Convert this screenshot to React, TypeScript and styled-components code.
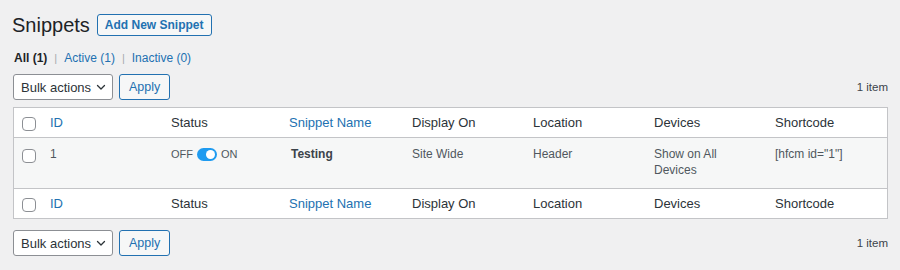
import React from 'react'
import styled, { createGlobalStyle } from 'styled-components'

const GlobalStyle = createGlobalStyle`
  html, body {
    margin: 0;
    background: #f0f0f1;
  }
  body {
    font-family: "Liberation Sans", Arial, sans-serif;
    font-size: 13px;
    color: #3c434a;
  }
`

const Wrap = styled.div`
  padding: 10px 12px 0 13px;
`

const TitleRow = styled.div`
  display: flex;
  align-items: center;
  gap: 7px;
`

const Heading = styled.h1`
  margin: 0 0 0 -1px;
  font-size: 20px;
  font-weight: 400;
  line-height: 30px;
  color: #1d2327;
`

const Button = styled.button<{ $strong?: boolean }>`
  height: ${(p) => (p.$strong ? '22px' : '26px')};
  padding: 0 ${(p) => (p.$strong ? '7px' : '9px')};
  border: 1px solid #2271b1;
  border-radius: 3px;
  background: #f6f7f7;
  color: #2271b1;
  font-family: inherit;
  font-size: ${(p) => (p.$strong ? '12px' : '12.5px')};
  font-weight: ${(p) => (p.$strong ? 700 : 400)};
  line-height: 1;
  cursor: pointer;
`

const Views = styled.ul`
  display: flex;
  align-items: center;
  gap: 7px;
  margin: 8px 0 0 1px;
  padding: 0;
  list-style: none;
  font-size: 12px;
  line-height: 20px;
`

const ViewItem = styled.li<{ $current?: boolean }>`
  color: ${(p) => (p.$current ? '#1d2327' : '#2271b1')};
  font-weight: ${(p) => (p.$current ? 700 : 400)};
`

const Sep = styled.li`
  color: #a7aaad;
  font-size: 11px;
`

const TableNav = styled.div<{ $top?: number }>`
  display: flex;
  align-items: center;
  gap: 6px;
  margin-top: ${(p) => p.$top ?? 0}px;
  height: 26px;
`

const Select = styled.div`
  display: flex;
  align-items: center;
  justify-content: space-between;
  box-sizing: border-box;
  width: 100px;
  height: 26px;
  padding: 0 5px 0 7px;
  border: 1px solid #8c8f94;
  border-radius: 3px;
  background: #fff;
  color: #2c3338;
  font-size: 13px;
`

const ItemCount = styled.span`
  margin-left: auto;
  font-size: 11.5px;
  color: #3c434a;
`

const Table = styled.table`
  width: 100%;
  margin-top: 7px;
  border: 1px solid #c3c4c7;
  border-spacing: 0;
  table-layout: fixed;
  background: #fff;
`

const HeadCell = styled.th<{ $link?: boolean; $foot?: boolean }>`
  padding: 6px 10px;
  text-align: left;
  font-weight: 400;
  font-size: 13px;
  line-height: 17px;
  color: ${(p) => (p.$link ? '#2271b1' : '#2c3338')};
  ${(p) => (p.$foot ? 'border-top: 1px solid #c3c4c7;' : 'border-bottom: 1px solid #c3c4c7;')}
  vertical-align: top;
`

const CheckCell = styled.th<{ $foot?: boolean; $body?: boolean }>`
  padding: ${(p) => (p.$body ? '8px 0 0 8px' : '6px 0 0 8px')};
  text-align: left;
  vertical-align: top;
  ${(p) => (p.$body ? '' : p.$foot ? 'border-top: 1px solid #c3c4c7;' : 'border-bottom: 1px solid #c3c4c7;')}
`

const Checkbox = styled.span`
  display: block;
  box-sizing: border-box;
  width: 14px;
  height: 14px;
  margin-top: 3px;
  border: 1px solid #8c8f94;
  border-radius: 4px;
  background: #fff;
`

const BodyRow = styled.tr`
  background: #f6f7f7;
`

const Cell = styled.td`
  padding: 8px 10px 10px;
  font-size: 12px;
  line-height: 16px;
  color: #50575e;
  vertical-align: top;
`

const Name = styled.strong`
  margin-left: 2px;
  color: #3c434a;
`

const Status = styled.span`
  display: inline-flex;
  align-items: center;
  gap: 4px;
  font-size: 11px;
`

const Toggle = styled.span<{ $on?: boolean }>`
  position: relative;
  display: inline-block;
  width: 20px;
  height: 13px;
  border-radius: 7px;
  background: ${(p) => (p.$on ? '#1e9bf0' : '#ccc')};

  &::after {
    content: '';
    position: absolute;
    top: 2px;
    left: ${(p) => (p.$on ? '9px' : '2px')};
    width: 9px;
    height: 9px;
    border-radius: 50%;
    background: #fff;
  }
`

const columns = [
  { label: 'ID', link: true },
  { label: 'Status' },
  { label: 'Snippet Name', link: true },
  { label: 'Display On' },
  { label: 'Location' },
  { label: 'Devices' },
  { label: 'Shortcode' }
]

const widths = [26, 121, 118, 123, 121, 121, 121, 122]

const Chevron = () => (
  <svg width="12" height="12" viewBox="0 0 12 12" fill="none">
    <path d="M2.5 4.5 6 8l3.5-3.5" stroke="#2c3338" strokeWidth="1.3" strokeLinecap="round" strokeLinejoin="round" />
  </svg>
)

const Nav: React.FC<{ top: number }> = ({ top }) => (
  <TableNav $top={top}>
    <Select>
      Bulk actions
      <Chevron />
    </Select>
    <Button>Apply</Button>
    <ItemCount>1 item</ItemCount>
  </TableNav>
)

const HeaderRow: React.FC<{ foot?: boolean }> = ({ foot }) => (
  <tr>
    <CheckCell $foot={foot}>
      <Checkbox />
    </CheckCell>
    {columns.map((c) => (
      <HeadCell key={c.label} $link={c.link} $foot={foot}>
        {c.label}
      </HeadCell>
    ))}
  </tr>
)

const App: React.FC = () => {
  return (
    <>
      <GlobalStyle />
      <Wrap>
        <TitleRow>
          <Heading>Snippets</Heading>
          <Button $strong>Add New Snippet</Button>
        </TitleRow>
        <Views>
          <ViewItem $current>All (1)</ViewItem>
          <Sep>|</Sep>
          <ViewItem>Active (1)</ViewItem>
          <Sep>|</Sep>
          <ViewItem>Inactive (0)</ViewItem>
        </Views>
        <Nav top={6} />
        <Table>
          <colgroup>
            {widths.map((w, i) => (
              <col key={i} style={{ width: w }} />
            ))}
          </colgroup>
          <thead>
            <HeaderRow />
          </thead>
          <tbody>
            <BodyRow>
              <CheckCell $body>
                <Checkbox />
              </CheckCell>
              <Cell>1</Cell>
              <Cell>
                <Status>
                  OFF <Toggle $on /> ON
                </Status>
              </Cell>
              <Cell>
                <Name>Testing</Name>
              </Cell>
              <Cell>Site Wide</Cell>
              <Cell>Header</Cell>
              <Cell>Show on All Devices</Cell>
              <Cell>[hfcm id="1"]</Cell>
            </BodyRow>
          </tbody>
          <tfoot>
            <HeaderRow foot />
          </tfoot>
        </Table>
        <Nav top={11} />
      </Wrap>
    </>
  )
}

export default App
